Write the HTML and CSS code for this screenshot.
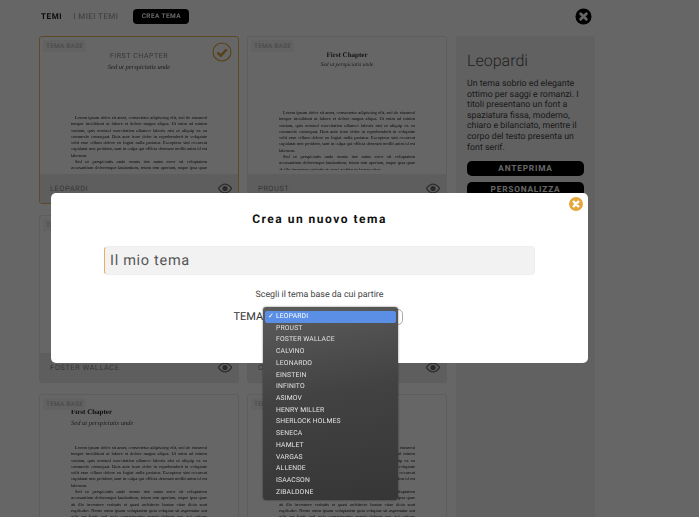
FILE: index.html
```html
<!DOCTYPE html>
<html lang="it">
<head>
<meta charset="utf-8">
<title>Temi</title>
<link rel="stylesheet" href="styles.css">
</head>
<body>
<div class="page">
  <header class="topbar">
    <nav class="tabs">
      <span class="tab tab-active">TEMI</span>
      <span class="tab">I MIEI TEMI</span>
      <span class="create">CREA TEMA</span>
    </nav>
    <svg class="close-top" viewBox="0 0 18 18"><circle cx="9" cy="9" r="8.5" fill="#000"/><path d="M6 6l6 6M12 6l-6 6" stroke="#fff" stroke-width="3" stroke-linecap="round"/></svg>
  </header>
  <main class="content">
    <section class="grid">
      <article class="card card-selected">
        <div class="preview">
          <span class="base">TEMA BASE</span>
          <svg class="check" viewBox="0 0 20 20"><circle cx="10" cy="10" r="9" fill="none" stroke="#d9a030" stroke-width="1.1"/><path d="M5.500 10.500l3.200 3.200 6-6.500" fill="none" stroke="#d9a030" stroke-width="2.400"/></svg>
          <h2 class="ch ch-mono">FIRST CHAPTER</h2>
          <p class="sub">Sed ut perspiciatis unde</p>
          <div class="body-text body-low">
            <p>Lorem ipsum dolor sit amet, consectetur adipiscing elit, sed do eiusmod tempor incididunt ut labore et dolore magna aliqua. Ut enim ad minim veniam, quis nostrud exercitation ullamco laboris nisi ut aliquip ex ea commodo consequat. Duis aute irure dolor in reprehenderit in voluptate velit esse cillum dolore eu fugiat nulla pariatur. Excepteur sint occaecat cupidatat non proident, sunt in culpa qui officia deserunt mollit anim id est laborum.</p>
            <p>Sed ut perspiciatis unde omnis iste natus error sit voluptatem accusantium doloremque laudantium, totam rem aperiam, eaque ipsa quae ab illo inventore veritatis et quasi architecto beatae vitae dicta sunt explicabo.</p>
          </div>
        </div>
        <footer class="foot"><span>LEOPARDI</span><svg class="eye" viewBox="0 0 16 12"><use href="#eye"/></svg></footer>
      </article>
      <article class="card">
        <div class="preview">
          <span class="base">TEMA BASE</span>
          <h2 class="ch ch-serif">First Chapter</h2>
          <p class="sub sub-small">Sed ut perspiciatis unde</p>
          <div class="body-text body-second">
            <p>Lorem ipsum dolor sit amet, consectetur adipiscing elit, sed do eiusmod tempor incididunt ut labore et dolore magna aliqua. Ut enim ad minim veniam, quis nostrud exercitation ullamco laboris nisi ut aliquip ex ea commodo consequat. Duis aute irure dolor in reprehenderit in voluptate velit esse cillum dolore eu fugiat nulla pariatur. Excepteur sint occaecat cupidatat non proident, sunt in culpa qui officia deserunt mollit anim id est laborum.</p>
            <p>Sed ut perspiciatis unde omnis iste natus error sit voluptatem accusantium doloremque laudantium, totam rem aperiam, eaque ipsa quae ab illo inventore veritatis et quasi architecto beatae vitae</p>
          </div>
        </div>
        <footer class="foot"><span>PROUST</span><svg class="eye" viewBox="0 0 16 12"><use href="#eye"/></svg></footer>
      </article>
      <article class="card">
        <div class="preview"><span class="base">TEMA BASE</span></div>
        <footer class="foot"><span>FOSTER WALLACE</span><svg class="eye" viewBox="0 0 16 12"><use href="#eye"/></svg></footer>
      </article>
      <article class="card">
        <div class="preview"><span class="base">TEMA BASE</span></div>
        <footer class="foot"><span>CALVINO</span><svg class="eye" viewBox="0 0 16 12"><use href="#eye"/></svg></footer>
      </article>
      <article class="card">
        <div class="preview">
          <span class="base">TEMA BASE</span>
          <h2 class="ch ch-left">First Chapter</h2>
          <p class="sub sub-left">Sed ut perspiciatis unde</p>
          <div class="body-text body-third">
            <p>Lorem ipsum dolor sit amet, consectetur adipiscing elit, sed do eiusmod tempor incididunt ut labore et dolore magna aliqua. Ut enim ad minim veniam, quis nostrud exercitation ullamco laboris nisi ut aliquip ex ea commodo consequat. Duis aute irure dolor in reprehenderit in voluptate velit esse cillum dolore eu fugiat nulla pariatur. Excepteur sint occaecat cupidatat non proident, sunt in culpa qui officia deserunt mollit anim id est laborum.</p>
            <p>Sed ut perspiciatis unde omnis iste natus error sit voluptatem accusantium doloremque laudantium, totam rem aperiam, eaque ipsa quae ab illo inventore veritatis et quasi architecto beatae vitae dicta sunt explicabo. Nemo enim ipsam voluptatem quia voluptas sit aspernatur aut odit aut fugit, sed quia consequuntur magni dolores eos qui ratione voluptatem sequi nesciunt.</p>
          </div>
        </div>
      </article>
      <article class="card">
        <div class="preview">
          <span class="base">TEMA BASE</span>
          <h2 class="ch ch-left">First Chapter</h2>
          <p class="sub sub-left">Sed ut perspiciatis unde</p>
          <div class="body-text body-third">
            <p>Lorem ipsum dolor sit amet, consectetur adipiscing elit, sed do eiusmod tempor incididunt ut labore et dolore magna aliqua. Ut enim ad minim veniam, quis nostrud exercitation ullamco laboris nisi ut aliquip ex ea commodo consequat. Duis aute irure dolor in reprehenderit in voluptate velit esse cillum dolore eu fugiat nulla pariatur. Excepteur sint occaecat cupidatat non proident, sunt in culpa qui officia deserunt mollit anim id est laborum.</p>
            <p>Sed ut perspiciatis unde omnis iste natus error sit voluptatem accusantium doloremque laudantium, totam rem aperiam, eaque ipsa quae ab illo inventore veritatis et quasi architecto beatae vitae dicta sunt explicabo. Nemo enim ipsam voluptatem quia voluptas sit aspernatur aut odit aut fugit, sed quia consequuntur magni dolores eos qui ratione voluptatem sequi nesciunt.</p>
          </div>
        </div>
      </article>
    </section>
    <aside class="side">
      <h1>Leopardi</h1>
      <p>Un tema sobrio ed elegante ottimo per saggi e romanzi. I titoli presentano un font a spaziatura fissa, moderno, chiaro e bilanciato, mentre il corpo del testo presenta un font serif.</p>
      <span class="side-btn">ANTEPRIMA</span>
      <span class="side-btn">PERSONALIZZA</span>
    </aside>
  </main>
</div>
<svg class="defs" width="0" height="0"><defs><g id="eye"><path d="M.5 6C3 2.300 5.500 1 8 1s5 1.300 7.500 5C13 9.700 10.500 11 8 11S3 9.700.5 6z" fill="none" stroke="#000" stroke-width="1.500"/><circle cx="8" cy="6" r="3" fill="#000"/></g></defs></svg>
<div class="overlay"></div>
<section class="modal">
  <svg class="close-modal" viewBox="0 0 14 14"><circle cx="7" cy="7" r="7" fill="#e5a73d"/><path d="M4.700 4.700l4.600 4.600M9.300 4.700l-4.600 4.600" stroke="#fff" stroke-width="2.400" stroke-linecap="round"/></svg>
  <h2 class="modal-title">Crea un nuovo tema</h2>
  <div class="name-input">Il mio tema</div>
  <p class="choose">Scegli il tema base da cui partire</p>
  <div class="select-row"><span>TEMA</span><span class="select-box"></span></div>
</section>
<ul class="menu">
  <li class="menu-on"><span class="tick">✓</span>LEOPARDI</li>
  <li>PROUST</li><li>FOSTER WALLACE</li><li>CALVINO</li><li>LEONARDO</li><li>EINSTEIN</li><li>INFINITO</li><li>ASIMOV</li><li>HENRY MILLER</li><li>SHERLOCK HOLMES</li><li>SENECA</li><li>HAMLET</li><li>VARGAS</li><li>ALLENDE</li><li>ISAACSON</li><li>ZIBALDONE</li>
</ul>
</body>
</html>
```
FILE: styles.css
```css
html { background: #fff; }
body {
  margin: 0;
  width: 699px;
  height: 517px;
  overflow: hidden;
  position: relative;
  font-family: Roboto, "Liberation Sans", sans-serif;
  text-rendering: geometricPrecision;
  filter: blur(0.45px);
}
.page { padding: 0 0 0 39px; height: 517px; box-sizing: border-box; overflow: hidden; }
.topbar { display: flex; align-items: center; justify-content: space-between; height: 32px; width: 553px; padding-left: 2px; box-sizing: border-box; }
.tabs { display: flex; align-items: center; }
.tab { font-size: 8px; font-weight: 500; letter-spacing: .4px; color: #aaa; margin-right: 11px; }
.tab-active { color: #222; font-weight: 700; letter-spacing: .6px; }
.create { margin-left: 4px; background: #000; color: #fff; font-size: 6.500px; font-weight: 700; letter-spacing: .4px; width: 56px; height: 15px; border-radius: 4px; display: flex; align-items: center; justify-content: center; }
.close-top { width: 17px; height: 17px; }
.content { display: flex; margin-top: 4px; }
.grid { display: grid; grid-template-columns: 200px 200px; grid-auto-rows: 168px; column-gap: 8px; row-gap: 11px; flex: none; }
.card { border: 1px solid #e8e8e8; border-radius: 3px; box-sizing: border-box; background: #fff; display: flex; flex-direction: column; overflow: hidden; }
.card-selected { border-color: #e5b85e; }
.preview { flex: 1; position: relative; overflow: hidden; min-height: 0; margin-bottom: 4px; }
.base { position: absolute; left: 3px; top: 3px; background: #f4f4f4; color: #bbb; font-size: 6.500px; font-weight: 500; letter-spacing: .2px; padding: 2px 3px; line-height: 8px; }
.check { position: absolute; right: 6px; top: 5px; width: 20px; height: 20px; }
.ch { margin: 0; text-align: center; }
.ch-mono { margin-top: 14.500px; font: 400 7px/9px Roboto, sans-serif; letter-spacing: .55px; color: #888; }
.ch-serif { margin-top: 13.500px; font: 700 7px/9px "Liberation Serif", serif; color: #333; }
.ch-left { margin: 13px 0 0 31px; text-align: left; font: 700 7px/9px "Liberation Serif", serif; color: #222; }
.sub { margin: 3.500px 0 0; text-align: center; font: italic 6.500px/8px "Liberation Serif", serif; color: #444; }
.sub-small { margin-top: 1.500px; font-size: 5.500px; }
.sub-left { margin: 3px 0 0 31px; text-align: left; }
.body-text { margin: 40px 31px 0; font: 4.500px/6.280px "Liberation Serif", serif; color: #111; text-align: justify; }
.body-low { margin-top: 43px; }
.body-second { margin-top: 41px; }
.body-third { margin-top: 17px; }
.body-text p { margin: 0; text-indent: 4px; }
.foot { height: 29px; flex: none; background: #ececec; display: flex; align-items: center; justify-content: space-between; padding: 0 6px 0 10px; font-size: 7.500px; letter-spacing: .5px; color: #888; }
.eye { width: 14px; height: 11px; opacity: .55; }
.side { margin-left: 9px; width: 139px; height: 481px; background: #f2f2f2; padding: 13px 11px; box-sizing: border-box; display: flex; flex-direction: column; flex: none; }
.side h1 { margin: 0; font-size: 16px; font-weight: 300; line-height: 24px; color: #555; }
.side p { margin: 6px 0 8px; font-size: 8.800px; line-height: 10.600px; color: #444; }
.side-btn { background: #000; color: #fff; font-size: 8.300px; font-weight: 700; letter-spacing: .8px; height: 15px; border-radius: 5px; margin-bottom: 6px; display: flex; align-items: center; justify-content: center; flex: none; }
.defs { position: absolute; }
.overlay { position: absolute; inset: 0; background: rgba(0,0,0,.6); }
.modal { position: absolute; left: 51px; top: 193px; width: 537px; height: 170px; background: #fff; border-radius: 5px; box-sizing: border-box; display: flex; flex-direction: column; align-items: center; }
.close-modal { position: absolute; right: 5px; top: 4px; width: 14px; height: 14px; }
.modal-title { margin: 19px 0 0; font-size: 12px; line-height: 14px; font-weight: 700; letter-spacing: 1.500px; color: #111; }
.name-input { margin-top: 20px; width: 431px; height: 29px; box-sizing: border-box; background: #f2f2f2; border-radius: 4px; border: 1px solid #eee; border-left: 1.500px solid #e5b060; padding-left: 5px; font-size: 14.500px; line-height: 27px; letter-spacing: .7px; color: #555; }
.choose { margin: 14px 0 0; font-size: 8.900px; line-height: 12px; color: #444; }
.select-row { margin-top: 8px; display: flex; align-items: center; font-size: 11px; color: #333; width: 169px; height: 15px; margin-left: -3px; }
.select-row span:first-child { flex: none; width: 30px; }
.select-box { flex: 1; height: 14px; border: 1px solid #aaa; border-radius: 5px; }
.menu { position: absolute; left: 263px; top: 307px; width: 135px; height: 193px; margin: 0; padding: 3px 2px; box-sizing: border-box; list-style: none; border-radius: 3px; background: linear-gradient(170deg, #5c5c5c, #424242 45%, #363636); box-shadow: 0 0 2px rgba(0,0,0,.6); }
.menu li { height: 11.720px; line-height: 11.720px; padding-left: 11px; font-size: 6.800px; font-weight: 400; letter-spacing: .15px; color: #e2e2e2; position: relative; top: 1px; }
.menu-on { background: #5b8fe6; border-radius: 2px; color: #fff !important; }
.tick { position: absolute; left: 3px; font-size: 7px; }
```
